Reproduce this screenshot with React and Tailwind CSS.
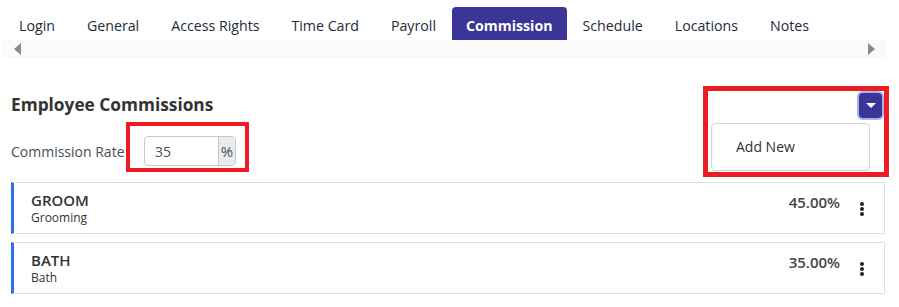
import React from 'react';

const tabs = ['Login', 'General', 'Access Rights', 'Time Card', 'Payroll', 'Commission', 'Schedule', 'Locations', 'Notes'];

const commissions = [
  { code: 'GROOM', name: 'Grooming', rate: '45.00%' },
  { code: 'BATH', name: 'Bath', rate: '35.00%' },
];

const Kebab = () => (
  <svg width="6" height="16" viewBox="0 0 6 16" className="text-[#222]">
    <circle cx="3" cy="3" r="2" fill="currentColor" />
    <circle cx="3" cy="8" r="2" fill="currentColor" />
    <circle cx="3" cy="13" r="2" fill="currentColor" />
  </svg>
);

export default function App() {
  return (
    <div className="w-[899px] h-[307px] bg-white overflow-hidden relative" style={{ fontFamily: '"Open Sans", "Noto Sans", sans-serif' }}>
      {/* Tabs */}
      <div className="pt-[7px] pl-[3px] pr-[13px]">
        <div className="flex h-[33px]">
          {tabs.map((t) => (
            <div
              key={t}
              className={`pt-[5px] flex items-center text-[14.2px] rounded-t ${
                t === 'Commission' ? 'bg-[#3a3596] text-white font-bold px-[14px]' : 'text-[#1c2b3a] px-4'
              }`}
            >
              {t}
            </div>
          ))}
        </div>
        <div className="h-[18px] bg-[#fafafa] flex items-center justify-between px-[11px]">
          <span className="w-0 h-0 border-y-[6px] border-y-transparent border-r-[7px] border-r-[#8a8a8a]" />
          <span className="w-0 h-0 border-y-[6px] border-y-transparent border-l-[7px] border-l-[#8a8a8a]" />
        </div>
      </div>

      {/* Body */}
      <div className="px-[11px] pr-[14px]">
        <div className="flex items-center justify-between mt-[32px] h-[30px]">
          <h2 className="text-[17.3px] font-bold text-[#333]">Employee Commissions</h2>
          <div className="relative mr-[3px]">
            <button className="w-[23px] h-[25px] rounded bg-[#3a3596] ring-2 ring-[#a4b4f3] flex items-center justify-center">
              <span className="w-0 h-0 border-x-[5px] border-x-transparent border-t-[5px] border-t-white" />
            </button>
            <div className="absolute right-[12px] top-[30px] w-[159px] h-[48px] bg-white border border-[#d4d4d4] rounded flex items-center pl-[24px] text-[14px] text-[#333]">
              Add New
            </div>
          </div>
        </div>

        <div className="flex items-center mt-[16px] h-[30px]">
          <label className="text-[14px] text-[#454d55] w-[133px]">Commission Rate</label>
          <div className="flex w-[92px] h-[30px] border border-[#c8c8c8] rounded">
            <div className="flex-1 pl-[10px] flex items-center text-[14px] text-[#495057]">35</div>
            <div className="w-[17px] bg-[#e9ecef] border-l border-[#c8c8c8] flex items-center justify-center text-[15px] text-[#495057] rounded-r">%</div>
          </div>
        </div>

        <div className="mt-[16px] flex flex-col gap-[8px]">
          {commissions.map((c) => (
            <div key={c.code} className="h-[52px] border border-[#dedede] border-l-[3px] border-l-[#2f6fed] flex items-center pl-[17px] pr-[19px]">
              <div className="flex-1">
                <div className="text-[15px] font-semibold text-[#333] leading-[19px]">{c.code}</div>
                <div className="text-[12px] text-[#333] leading-[16px]">{c.name}</div>
              </div>
              <div className="self-start mt-[8px] text-[15px] font-semibold text-[#444]">{c.rate}</div>
              <div className="ml-[19px] mt-[2px]">
                <Kebab />
              </div>
            </div>
          ))}
        </div>
      </div>

      {/* annotation boxes */}
      <div className="absolute left-[126px] top-[122px] w-[123px] h-[50px] border-4 border-[#ed1c24] pointer-events-none" />
      <div className="absolute left-[703px] top-[86px] w-[186px] h-[91px] border-[5px] border-[#ed1c24] pointer-events-none" />
    </div>
  );
}
